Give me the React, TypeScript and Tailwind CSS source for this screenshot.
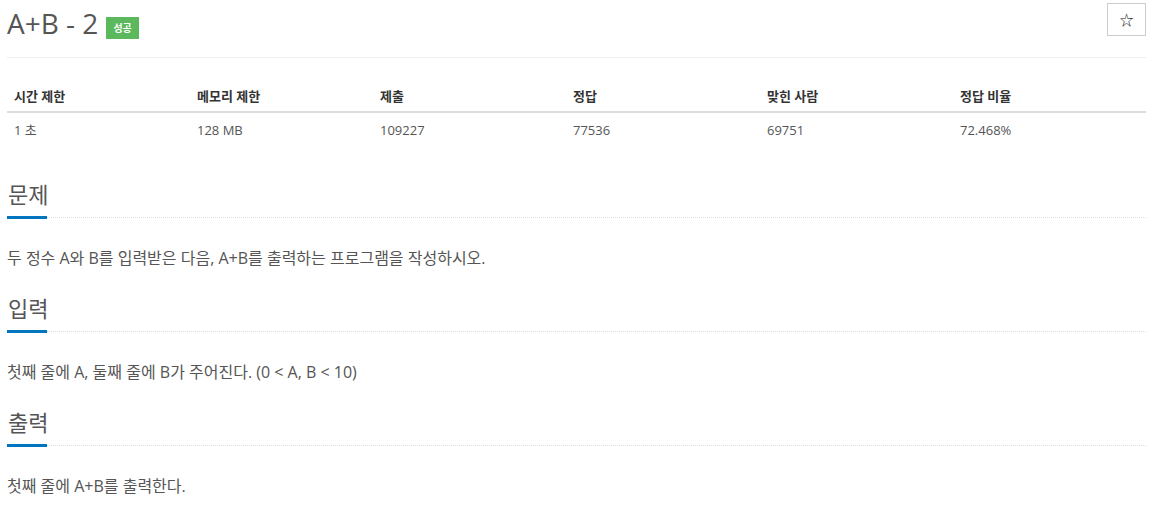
const font = { fontFamily: "'Open Sans', 'Noto Sans CJK KR', sans-serif" }

const stats = [
  { label: '시간 제한', value: '1 초', w: 'w-[183px]' },
  { label: '메모리 제한', value: '128 MB', w: 'w-[183px]' },
  { label: '제출', value: '109227', w: 'w-[193px]' },
  { label: '정답', value: '77536', w: 'w-[194px]' },
  { label: '맞힌 사람', value: '69751', w: 'w-[193px]' },
  { label: '정답 비율', value: '72.468%', w: 'flex-1' },
]

const sections = [
  { title: '문제', body: '두 정수 A와 B를 입력받은 다음, A+B를 출력하는 프로그램을 작성하시오.' },
  { title: '입력', body: '첫째 줄에 A, 둘째 줄에 B가 주어진다. (0 < A, B < 10)' },
  { title: '출력', body: '첫째 줄에 A+B를 출력한다.' },
]

function Section({ title, body, first }: { title: string; body: string; first?: boolean }) {
  return (
    <section className={first ? 'mt-[33px]' : 'mt-[28px]'}>
      <div className="relative h-[37px]">
        <h2 className="text-[22px] leading-[24px] text-[#555] pl-px">{title}</h2>
        <div className="absolute left-0 right-0 bottom-[1px] border-b border-dotted border-[#ddd]" />
        <div className="absolute left-0 bottom-0 w-[40px] h-[3px] bg-[#0076c0]" />
      </div>
      <p className="mt-[29px] text-[16px] leading-[20px] text-[#555]">{body}</p>
    </section>
  )
}

export default function App() {
  return (
    <div className="bg-white min-h-screen w-[1163px] pl-[7px] pr-[17px]" style={font}>
      <div className="flex items-start justify-between pt-[3px] pb-[19px] border-b border-[#eee]">
        <div className="flex items-end gap-[8px] pt-[5px]">
          <h1 className="text-[28px] leading-[30px] text-[#555]">A+B - 2</h1>
          <span className="mb-[-1px] inline-block bg-[#5cb85c] text-white text-[10px] font-bold leading-[22px] px-[7px]">성공</span>
        </div>
        <button className="w-[39px] h-[33px] border border-[#ccc] flex items-center justify-center text-[#222] text-[14px] leading-none">
          ☆
        </button>
      </div>

      <div className="mt-[24px] text-[13px] text-[#555]">
        <div className="flex h-[31px] border-b-2 border-[#ddd] items-center">
          {stats.map((s) => (
            <div key={s.label} className={`${s.w} px-[7px] font-bold text-[#333]`}>{s.label}</div>
          ))}
        </div>
        <div className="flex h-[36px] items-center">
          {stats.map((s) => (
            <div key={s.label} className={`${s.w} px-[7px]`}>{s.value}</div>
          ))}
        </div>
      </div>

      {sections.map((s, i) => (
        <Section key={s.title} title={s.title} body={s.body} first={i === 0} />
      ))}
    </div>
  )
}
